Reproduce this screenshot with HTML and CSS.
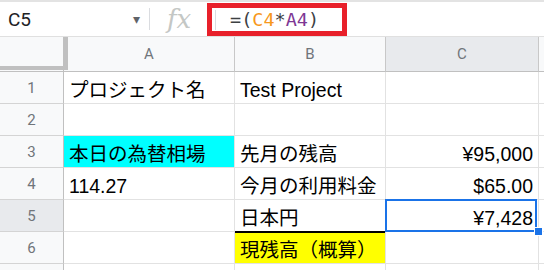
FILE: index.html
```html
<!DOCTYPE html>
<html lang="ja">
<head>
  <meta charset="UTF-8">
  <title>Sheet</title>
  <link rel="stylesheet" href="styles.css">
</head>
<body>
  <div class="formula-bar">
    <div class="name-box">
      <span class="cell-ref">C5</span>
      <span class="caret">▾</span>
    </div>
    <div class="fx">fx</div>
    <div class="formula-input">
      <span class="formula-text">=(<span class="ref-c">C4</span>*<span class="ref-a">A4</span>)</span>
    </div>
  </div>

  <div class="grid">
    <div class="corner"></div>
    <div class="col-head">A</div>
    <div class="col-head">B</div>
    <div class="col-head selected">C</div>
    <div class="col-head"></div>

    <div class="row-head">1</div>
    <div class="cell">プロジェクト名</div>
    <div class="cell">Test Project</div>
    <div class="cell"></div>
    <div class="cell"></div>

    <div class="row-head">2</div>
    <div class="cell"></div>
    <div class="cell"></div>
    <div class="cell"></div>
    <div class="cell"></div>

    <div class="row-head">3</div>
    <div class="cell cyan">本日の為替相場</div>
    <div class="cell">先月の残高</div>
    <div class="cell num">¥95,000</div>
    <div class="cell"></div>

    <div class="row-head">4</div>
    <div class="cell">114.27</div>
    <div class="cell">今月の利用料金</div>
    <div class="cell num">$65.00</div>
    <div class="cell"></div>

    <div class="row-head selected">5</div>
    <div class="cell"></div>
    <div class="cell under-line">日本円</div>
    <div class="cell num active">¥7,428<span class="handle"></span></div>
    <div class="cell"></div>

    <div class="row-head">6</div>
    <div class="cell"></div>
    <div class="cell yellow">現残高（概算）</div>
    <div class="cell"></div>
    <div class="cell"></div>

    <div class="row-head"></div>
    <div class="cell"></div>
    <div class="cell"></div>
    <div class="cell"></div>
    <div class="cell"></div>
  </div>
</body>
</html>
```

FILE: styles.css
```css
* {
  box-sizing: border-box;
  margin: 0;
  padding: 0;
}
body {
  width: 544px;
  height: 270px;
  overflow: hidden;
  background-color: #fff;
  font-family: Roboto, "Noto Sans CJK JP", sans-serif;
}

/* formula bar */
.formula-bar {
  display: flex;
  align-items: center;
  height: 37px;
  border-top: 2px solid #e3e3e3;
  border-bottom: 1px solid #e0e0e0;
}
.name-box {
  display: flex;
  align-items: center;
  justify-content: space-between;
  width: 150px;
  height: 22px;
  padding: 0 9px 0 8px;
  border-right: 1px solid #dadce0;
}
.cell-ref {
  font-size: 19px;
  color: #202124;
}
.caret {
  font-size: 14px;
  color: #5f6368;
}
.fx {
  width: 57px;
  padding-left: 17px;
  font-family: "DejaVu Serif", serif;
  font-style: italic;
  font-size: 26px;
  line-height: 30px;
  color: #c4c7c5;
}
.formula-input {
  display: flex;
  align-items: center;
  width: 140px;
  height: 33px;
  margin-top: 1px;
  border: 5px solid #e8202a;
}
.formula-input::before {
  content: "";
  width: 1px;
  height: 20px;
  margin: 0 14px 0 3px;
  background-color: #dadce0;
}
.formula-text {
  font-family: "DejaVu Sans Mono", monospace;
  font-size: 18.5px;
  color: #3c4043;
}
.ref-c {
  color: #f7981d;
}
.ref-a {
  color: #7e3794;
}

/* sheet grid */
.grid {
  display: grid;
  grid-template-columns: 64px 171px 151px 153px 1fr;
  grid-template-rows: 35px repeat(6, 32px) 32px;
}
.corner {
  position: relative;
  background-color: #f8f9fa;
  border-right: 1px solid #c0c0c0;
  border-bottom: 1px solid #c0c0c0;
}
.corner::after {
  content: "";
  position: absolute;
  top: 0;
  left: 0;
  width: 63px;
  height: 29px;
  border-right: 5px solid #c0c0c0;
  border-bottom: 4px solid #c0c0c0;
}
.col-head,
.row-head {
  display: flex;
  align-items: center;
  justify-content: center;
  background-color: #f8f9fa;
  color: #70757a;
  font-size: 15px;
}
.col-head {
  border-right: 1px solid #c8c8c8;
  border-bottom: 1px solid #c0c0c0;
}
.row-head {
  border-right: 1px solid #c0c0c0;
  border-bottom: 1px solid #d4d4d4;
}
.col-head.selected,
.row-head.selected {
  background-color: #e8eaed;
}
.cell {
  position: relative;
  display: flex;
  align-items: flex-end;
  padding: 0 5px 2px 5px;
  border-right: 1px solid #e2e2e2;
  border-bottom: 1px solid #e2e2e2;
  font-family: "Liberation Sans", "Noto Sans CJK JP", sans-serif;
  font-size: 19.5px;
  line-height: 22px;
  color: #000;
  white-space: nowrap;
}
.cell.num {
  justify-content: flex-end;
}
.cyan {
  background-color: #00ffff;
}
.yellow {
  background-color: #ffff00;
  box-shadow: inset 0 1px #000;
}
.under-line {
  border-bottom-color: #000;
}
.active::after {
  content: "";
  position: absolute;
  top: -1px;
  left: -1px;
  right: 1px;
  bottom: -1px;
  border: 2px solid #1a73e8;
}
.handle {
  position: absolute;
  right: -5px;
  bottom: -5px;
  z-index: 2;
  width: 9px;
  height: 9px;
  background-color: #1a73e8;
  border: 1px solid #fff;
}
```
